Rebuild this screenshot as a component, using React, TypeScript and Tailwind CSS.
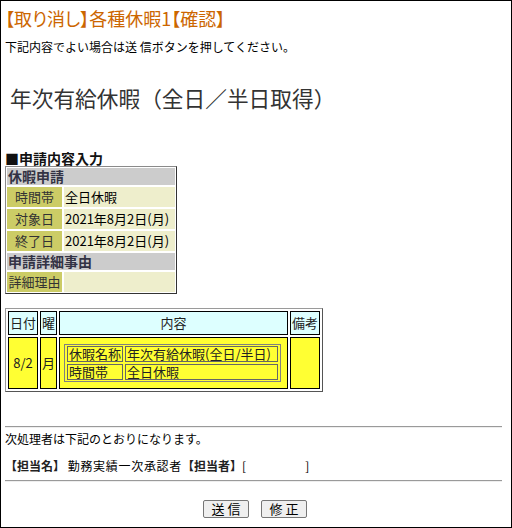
import React from "react";

const font = "font-['Noto_Sans_CJK_JP','Noto_Sans',sans-serif]";

function Hr() {
  return <div className="w-[497px] h-[2px] border-t border-t-[#9a9a9a] border-b border-b-[#eeeeee]" />;
}

function RequestTable() {
  const label = "h-[20px] bg-[#cccc66] text-[#333] text-[13px] leading-[20px] text-center whitespace-nowrap";
  const value = "h-[20px] bg-[#eeeecc] text-[13px] leading-[20px] pl-[1px] whitespace-nowrap";
  const head = "col-span-2 h-[17px] bg-[#cccccc] text-[#333344] text-[14px] font-bold leading-[17px] pl-[1px]";
  return (
    <div className="mt-[1px] w-[172px] grid grid-cols-[55px_111px] gap-[2px] p-[1px] border border-t-[#8a8a8a] border-l-[#8a8a8a] border-r-[#333] border-b-[#333]">
      <div className={head}>休暇申請</div>
      <div className={label}>時間帯</div>
      <div className={value}>全日休暇</div>
      <div className={label}>対象日</div>
      <div className={value}>2021年8月2日(月)</div>
      <div className={label}>終了日</div>
      <div className={value}>2021年8月2日(月)</div>
      <div className={head}>申請詳細事由</div>
      <div className={label}>詳細理由</div>
      <div className={value}></div>
    </div>
  );
}

function DetailTable() {
  const th = "h-[24px] bg-[#ddffff] border border-black text-[13px] flex items-center justify-center text-[#222]";
  const td = "h-[52px] bg-[#ffff33] border border-black text-[13px] flex items-center justify-center text-[#222]";
  const inner = "h-[16px] border border-[#666] text-[13px] leading-[14px] pl-[1px] whitespace-nowrap text-[#222]";
  return (
    <div className="mt-[14px] w-[318px] grid grid-cols-[30px_17px_229px_30px] gap-[2px] p-[2px] border border-t-[#9a9a9a] border-l-[#9a9a9a] border-r-[#555] border-b-[#555]">
      <div className={th}>日付</div>
      <div className={th}>曜</div>
      <div className={th}>内容</div>
      <div className={th}>備考</div>
      <div className={td}>8/2</div>
      <div className={td}>月</div>
      <div className="h-[52px] bg-[#ffff33] border border-black pl-[4px] pt-[6px]">
        <div className="w-[217px] grid grid-cols-[56px_153px] gap-[2px] px-[2px] py-[1px] border border-[#808080]">
          <div className={inner}>休暇名称</div>
          <div className={inner}>年次有給休暇(全日/半日)</div>
          <div className={inner}>時間帯</div>
          <div className={inner}>全日休暇</div>
        </div>
      </div>
      <div className={td}></div>
    </div>
  );
}

function Btn({ children }: { children: React.ReactNode }) {
  return (
    <button className="w-[46px] h-[18px] bg-[#efefef] border border-[#767676] rounded-[2px] text-[13px] leading-[16px] text-black">
      {children}
    </button>
  );
}

export default function App() {
  return (
    <div className={`w-[512px] h-[528px] border border-black bg-white text-black ${font} overflow-hidden`}>
      <div className="pl-[4px]">
        <div className="mt-[7px] text-[18px] leading-[20px] text-[#cc6600] [font-feature-settings:'palt']">【取り消し】各種休暇1【確認】</div>
        <div className="mt-[11px] text-[12px] leading-[16px]">下記内容でよい場合は送 信ボタンを押してください。</div>
        <div className="mt-[29px] pl-[5px] text-[21.7px] leading-[28px] text-[#333]">年次有給休暇（全日／半日取得）</div>
        <div className="mt-[39px] text-[14px] font-bold leading-[14px] text-[#111]">■申請内容入力</div>
        <RequestTable />
        <DetailTable />
        <div className="mt-[34px]">
          <Hr />
        </div>
        <div className="mt-[3px] text-[12px] leading-[16px]">次処理者は下記のとおりになります。</div>
        <div className="mt-[11px] text-[12px] leading-[16px] whitespace-pre">
          <span className="font-bold text-[#222]">【担当名】</span> <span className="tracking-[0.7px]">勤務実績一次承認者</span><span className="font-bold text-[#222]">【担当者】</span>[                      ]
        </div>
        <div className="mt-[6px]">
          <Hr />
        </div>
        <div className="mt-[18px] w-[500px] flex justify-center gap-[12px]">
          <Btn>送 信</Btn>
          <Btn>修 正</Btn>
        </div>
      </div>
    </div>
  );
}
